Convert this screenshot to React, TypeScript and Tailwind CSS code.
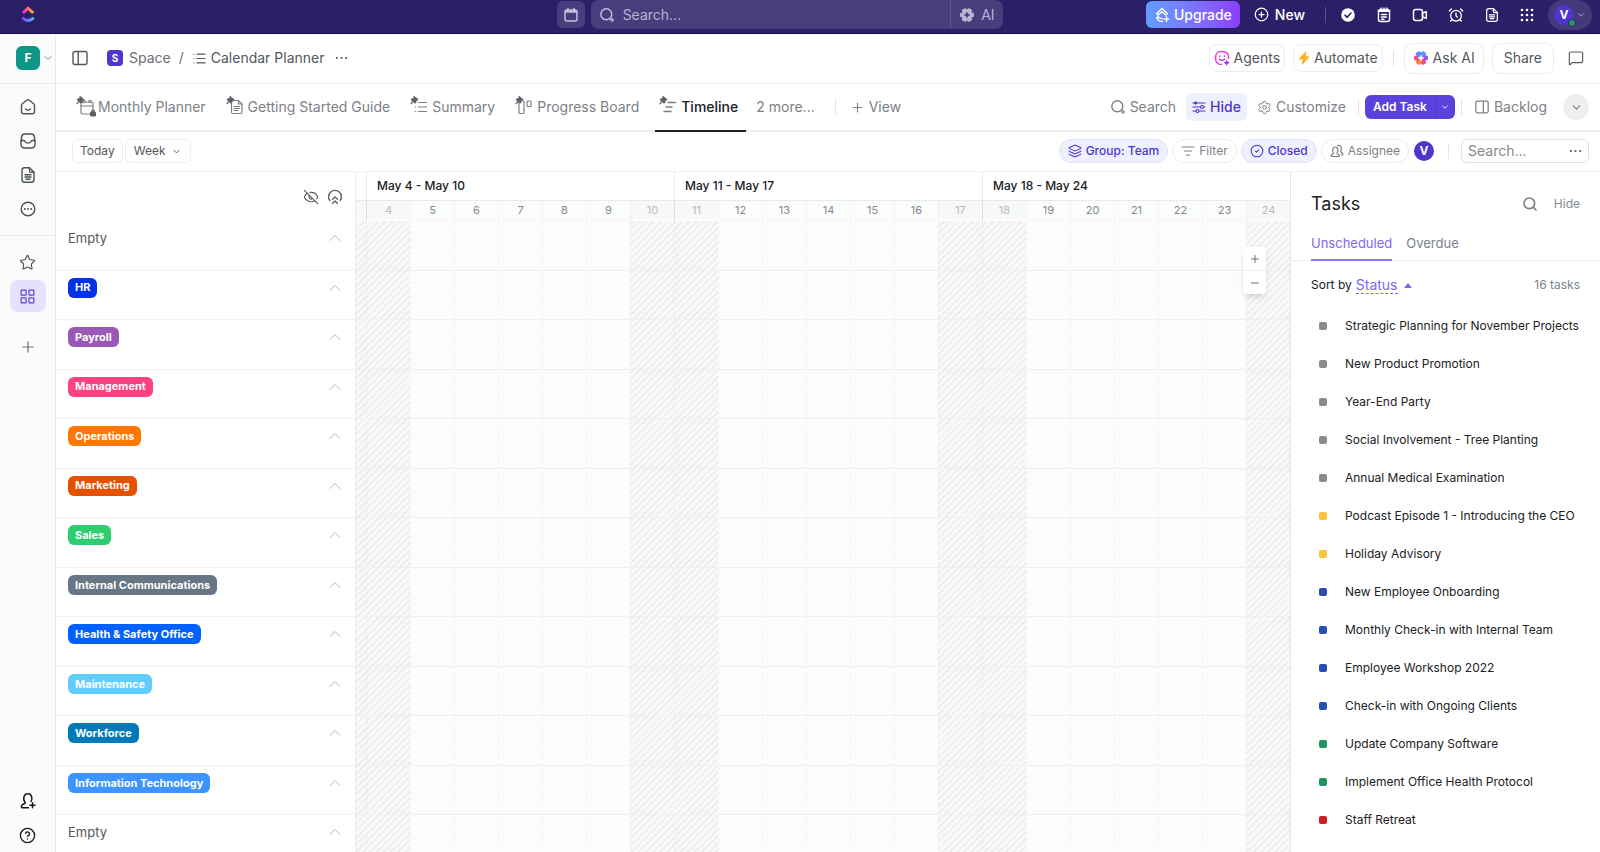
import React, { useState } from 'react';
import {
  AlarmClock,
  ChevronDown,
  ChevronUp,
  CircleCheck,
  CircleHelp,
  CirclePlus,
  EyeOff,
  Layers,
  LayoutGrid,
  List,
  ListFilter,
  MessageSquare,
  Minus,
  Plus,
  Search,
  Settings,
  Star,
} from 'lucide-react';

interface Group {
  name: string;
  color?: string;
}

const groups: Group[] = [
  { name: 'Empty' },
  { name: 'HR', color: 'bg-[#0231e8]' },
  { name: 'Payroll', color: 'bg-[#9b59b6]' },
  { name: 'Management', color: 'bg-[#ff4081]' },
  { name: 'Operations', color: 'bg-[#ff7800]' },
  { name: 'Marketing', color: 'bg-[#e65100]' },
  { name: 'Sales', color: 'bg-[#2ecd6f]' },
  { name: 'Internal Communications', color: 'bg-[#667684]' },
  { name: 'Health & Safety Office', color: 'bg-[#0061ff]' },
  { name: 'Maintenance', color: 'bg-[#61cdff]' },
  { name: 'Workforce', color: 'bg-[#0079b8]' },
  { name: 'Information Technology', color: 'bg-[#3b94ff]' },
  { name: 'Empty' },
];

const tasks = [
  { title: 'Strategic Planning for November Projects', color: 'bg-[#8b8b8b]' },
  { title: 'New Product Promotion', color: 'bg-[#8b8b8b]' },
  { title: 'Year-End Party', color: 'bg-[#8b8b8b]' },
  { title: 'Social Involvement - Tree Planting', color: 'bg-[#8b8b8b]' },
  { title: 'Annual Medical Examination', color: 'bg-[#8b8b8b]' },
  { title: 'Podcast Episode 1 - Introducing the CEO', color: 'bg-[#fbc23c]' },
  { title: 'Holiday Advisory', color: 'bg-[#fbc23c]' },
  { title: 'New Employee Onboarding', color: 'bg-[#2a4db5]' },
  { title: 'Monthly Check-in with Internal Team', color: 'bg-[#2a4db5]' },
  { title: 'Employee Workshop 2022', color: 'bg-[#2a4db5]' },
  { title: 'Check-in with Ongoing Clients', color: 'bg-[#2a4db5]' },
  { title: 'Update Company Software', color: 'bg-[#1f9461]' },
  { title: 'Implement Office Health Protocol', color: 'bg-[#1f9461]' },
  { title: 'Staff Retreat', color: 'bg-[#cb1d22]' },
];

const weeks = ['May 4 - May 10', 'May 11 - May 17', 'May 18 - May 24'];
const days = Array.from({ length: 21 }, (_, i) => i + 4);
const isWeekend = (day: number) => day % 7 === 3 || day % 7 === 4;

const dayColumns = 'grid grid-cols-[10px_repeat(21,minmax(0,1fr))]';
const hatch =
  'bg-fixed bg-[repeating-linear-gradient(135deg,#f8f9f9_0px,#f8f9f9_3px,#eeeeee_3px,#eeeeee_5px)]';

/* ---------- icons ---------- */

function Logo() {
  return (
    <svg width="16" height="18" viewBox="0 0 16 18" fill="none">
      <defs>
        <linearGradient id="logoTop" x1="1" x2="15" y1="6" y2="6" gradientUnits="userSpaceOnUse">
          <stop stopColor="#ff02f0" />
          <stop offset="0.5" stopColor="#f76b7a" />
          <stop offset="1" stopColor="#ffc800" />
        </linearGradient>
        <linearGradient id="logoBottom" x1="1" x2="15" y1="14" y2="14" gradientUnits="userSpaceOnUse">
          <stop stopColor="#8930fd" />
          <stop offset="1" stopColor="#49ccf9" />
        </linearGradient>
      </defs>
      <path d="M2.8 8 8 3.2 13.2 8" stroke="url(#logoTop)" strokeWidth="3" />
      <path d="M2.4 12.6c3.2 3.8 8 3.8 11.2 0" stroke="url(#logoBottom)" strokeWidth="2.8" />
    </svg>
  );
}

function CalendarGlyph() {
  return (
    <svg width="16" height="16" viewBox="0 0 16 16" fill="none" stroke="currentColor" strokeWidth="1.5">
      <rect x="2" y="3" width="12" height="11" rx="2" />
      <path d="M2 4.5h12" strokeWidth="2.4" />
      <path d="M5 1.5v2M11 1.5v2" strokeLinecap="round" />
    </svg>
  );
}

// Six petals round a small star, tinted by the caller
function AiFlower({ colorful = false }: { colorful?: boolean }) {
  const petals = ['#4f9cf9', '#8b5cf6', '#f0468a', '#ff8a2a', '#f0468a', '#5a8bf7'];
  return (
    <svg width="16" height="16" viewBox="0 0 16 16">
      <defs>
        <mask id="flowerHole">
          <rect width="16" height="16" fill="#fff" />
          <path d="M8 5.2 8.9 7.1 10.8 8 8.9 8.9 8 10.8 7.1 8.9 5.2 8 7.1 7.1z" fill="#000" stroke="#000" strokeWidth="0.6" />
        </mask>
      </defs>
      <g mask="url(#flowerHole)">
        {petals.map((petal, i) => (
          <rect
            key={i}
            x="5.4"
            y="1"
            width="5.2"
            height="6.4"
            rx="1.8"
            fill={colorful ? petal : 'currentColor'}
            transform={`rotate(${i * 60 + 30} 8 8)`}
          />
        ))}
      </g>
    </svg>
  );
}

function MagnifierGlyph() {
  return (
    <svg width="16" height="16" viewBox="0 0 16 16" fill="none" stroke="currentColor">
      <circle cx="7.3" cy="7.3" r="5.5" strokeWidth="1.4" />
      <circle cx="13" cy="13" r="1.2" strokeWidth="1.2" />
    </svg>
  );
}

function UpgradeGlyph() {
  return (
    <svg width="16" height="16" viewBox="0 0 16 16" fill="none" stroke="currentColor" strokeWidth="1.4" strokeLinecap="round" strokeLinejoin="round">
      <path d="M2.6 6.4 8 1.6l5.4 4.8-1.6 1.6L8 4.8 4.2 8z" />
      <path d="M4.2 9.6 2.6 10.8c1.2 2.6 3.3 3.8 5.8 3.6M4.2 9.6c.9 1.6 2.2 2.2 4.2 2M12.5 9.6v5M10 12.1h5" />
    </svg>
  );
}

function CheckDisc() {
  return (
    <svg width="16" height="16" viewBox="0 0 16 16" fill="none">
      <circle cx="8" cy="8" r="6.8" fill="#fff" />
      <path d="M5 8.2 7.2 10.3 11 6" stroke="#2b2068" strokeWidth="1.6" strokeLinecap="round" strokeLinejoin="round" />
    </svg>
  );
}

function NotepadGlyph() {
  return (
    <svg width="16" height="16" viewBox="0 0 16 16" fill="none" stroke="currentColor" strokeWidth="1.4" strokeLinecap="round">
      <rect x="2.5" y="2.5" width="11" height="12" rx="2" />
      <path d="M2.5 4h11" strokeWidth="2" />
      <path d="M5 1v2.5M8 1v2.5M11 1v2.5M5.5 7.5h5M5.5 10h5M5.5 12.2h2.5" />
    </svg>
  );
}

function ClipGlyph() {
  return (
    <svg width="16" height="16" viewBox="0 0 16 16" fill="none" stroke="currentColor" strokeWidth="1.5" strokeLinejoin="round">
      <rect x="1.5" y="2.5" width="9" height="11" rx="2.2" />
      <path d="M10.5 6 14.3 4.8v6.4L10.5 10z" />
    </svg>
  );
}

function DotGrid() {
  return (
    <svg width="14" height="14" viewBox="0 0 14 14" fill="currentColor">
      {[2, 7, 12].map((y) => [2, 7, 12].map((x) => <circle key={`${x}-${y}`} cx={x} cy={y} r="1.3" />))}
    </svg>
  );
}

function Dots() {
  return (
    <svg width="13" height="14" viewBox="0 0 14 14" fill="currentColor">
      <circle cx="2" cy="7" r="1.2" />
      <circle cx="7" cy="7" r="1.2" />
      <circle cx="12" cy="7" r="1.2" />
    </svg>
  );
}

function HomeGlyph() {
  return (
    <svg width="18" height="18" viewBox="0 0 18 18" fill="none" stroke="currentColor" strokeWidth="1.4" strokeLinecap="round" strokeLinejoin="round">
      <path d="M2.5 7.6c0-.8.3-1.4.9-1.9l4.2-3.4c.8-.7 2-.7 2.8 0l4.2 3.4c.6.5.9 1.1.9 1.9v5.9c0 1.3-.9 2.2-2.2 2.2H4.7c-1.3 0-2.2-.9-2.2-2.2z" />
      <path d="M6.5 11c1.5 1.4 3.5 1.4 5 0" />
    </svg>
  );
}

function InboxGlyph() {
  return (
    <svg width="18" height="18" viewBox="0 0 18 18" fill="none" stroke="currentColor" strokeWidth="1.4" strokeLinecap="round" strokeLinejoin="round">
      <path d="M2 9.5 2.7 4.6C3 2.9 4 2 5.7 2h6.6c1.7 0 2.7.9 3 2.6L16 9.5V12c0 2.5-1.5 4-4 4H6c-2.5 0-4-1.5-4-4z" />
      <path d="M2 8.5h2.6c.7 0 1.1.4 1.4 1 .9 2.2 5.1 2.2 6 0 .3-.6.7-1 1.4-1H16" />
    </svg>
  );
}

function DocGlyph({ size = 18 }: { size?: number }) {
  return (
    <svg width={size} height={size} viewBox="0 0 18 18" fill="none" stroke="currentColor" strokeWidth="1.4" strokeLinecap="round" strokeLinejoin="round">
      <path d="M10.5 1.8H5.4c-1.4 0-2.4 1-2.4 2.4v9.6c0 1.4 1 2.4 2.4 2.4h7.2c1.4 0 2.4-1 2.4-2.4V6.3z" />
      <path d="M10.5 1.8v3.1c0 .8.6 1.4 1.4 1.4H15M6 8.8h6M6 11h6M7 13.2h4" />
    </svg>
  );
}

function CircleDots() {
  return (
    <svg width="18" height="18" viewBox="0 0 18 18" fill="none" stroke="currentColor" strokeWidth="1.4">
      <circle cx="9" cy="9" r="6.8" />
      <path d="M5.8 9h.1M9 9h.1M12.2 9h.1" strokeWidth="1.8" strokeLinecap="round" />
    </svg>
  );
}

function InviteGlyph() {
  return (
    <svg width="18" height="18" viewBox="0 0 18 18" fill="none" stroke="currentColor" strokeWidth="1.5" strokeLinecap="round" strokeLinejoin="round">
      <path d="M9.5 15.8H4c-1.3 0-2-.9-1.5-2.1.4-1 1.5-1.6 3-2.2.8-.3.9-1 .3-1.7C3.6 7 4.8 1.8 8.7 1.8s5.3 4.4 3.3 7.6" />
      <path d="M13.5 10.8v5M11 13.3h5" />
    </svg>
  );
}

function SidebarGlyph({ size = 18, right = false }: { size?: number; right?: boolean }) {
  return (
    <svg width={size} height={size} viewBox="0 0 18 18" fill="none" stroke="currentColor" strokeWidth="1.4">
      <rect x="2" y="2.5" width="14" height="13" rx="2" />
      <path d={right ? 'M10.5 2.5v13' : 'M7.2 2.5v13'} />
    </svg>
  );
}

function AgentsGlyph() {
  return (
    <svg width="16" height="16" viewBox="0 0 16 16" fill="none" strokeLinecap="round">
      <path d="M14.5 8.5C15 4 13 1.5 8 1.5S1.5 3.5 1.5 8s1.8 6.5 6 6.5" stroke="#e040f0" strokeWidth="1.5" />
      <path d="M5.7 6v.6M10.3 6v.6M5.5 9.3c1.3 1.4 3.7 1.4 5 0" stroke="#b92ce0" strokeWidth="1.3" />
      <path d="M12.7 9.5 13.7 11.7 16 12.7 13.7 13.7 12.7 16 11.7 13.7 9.5 12.7 11.7 11.7z" fill="#b224ef" />
    </svg>
  );
}

function BoltGlyph() {
  return (
    <svg width="12" height="16" viewBox="0 0 12 16" fill="#fdb022">
      <path d="M7.5 1.8C8 1.2 8.6 1.5 8.4 2.3L7.7 6.2h2.6c.8 0 1 .6.6 1.2L4.9 14.3c-.5.5-1 .2-.9-.5L4.7 9.6H1.8c-.8 0-1-.6-.6-1.2z" />
    </svg>
  );
}

function SlidersGlyph() {
  return (
    <svg width="14" height="14" viewBox="0 0 14 14" fill="none" stroke="currentColor" strokeWidth="1.2" strokeLinecap="round">
      <path d="M1 3h12M1 7h7M12 7h1M1 11h2.5M7.5 11H13" />
      <circle cx="10" cy="7" r="1.5" />
      <circle cx="5.5" cy="11" r="1.5" />
      <circle cx="3.6" cy="3" r="1" fill="currentColor" />
    </svg>
  );
}

function AssigneeGlyph() {
  return (
    <svg width="14" height="14" viewBox="0 0 14 14" fill="none" stroke="currentColor" strokeWidth="1.2" strokeLinecap="round" strokeLinejoin="round">
      <path d="M1.2 12.5c-.4-1.5.8-2.2 2-2.7.6-.3.6-.8.2-1.3C1.8 6.3 2.7 3 5.3 3s3.5 3.3 1.9 5.5c-.4.5-.4 1 .2 1.3 1.2.5 2.4 1.2 2 2.7z" />
      <path d="M7.5 1.5c3.3-1 5 2.5 3.3 5.3-.4.6-.2 1 .4 1.3 1.3.7 1.9 1.3 1.6 2.9h-1.3" />
    </svg>
  );
}

function CollapseGlyph() {
  return (
    <svg width="16" height="16" viewBox="0 0 16 16" fill="none" stroke="currentColor" strokeWidth="1.3" strokeLinecap="round" strokeLinejoin="round">
      <path d="M2.8 11.5a6.4 6.4 0 1 1 10.4 0" />
      <path d="M5.5 10.2 8 8l2.5 2.2M5.5 14.2 8 12l2.5 2.2" />
    </svg>
  );
}

// View icon with the small pin over its upper left corner
function TabIcon({ children }: { children: React.ReactNode }) {
  return (
    <svg className="shrink-0" width="22" height="24" viewBox="0 0 22 24" fill="none" stroke="currentColor" strokeWidth="1.2" strokeLinecap="round">
      {children}
      <path d="M4.2 1.3 8.2 4.4 7.4 5.2 6.6 5.3 5.8 8 4.9 8.2 3.4 6.9 1 9.2.6 8.9 2.6 6.2 1 4.8 1.4 4 4 3.1 3.7 2z" fill="#5c5f66" stroke="#5c5f66" strokeWidth="0.6" />
    </svg>
  );
}

const tabs = [
  {
    name: 'Monthly Planner',
    icon: (
      <>
        <rect x="5" y="7" width="12" height="12" rx="1.5" />
        <path d="M5 11h12" />
        <circle cx="8" cy="6.5" r="1.2" fill="#fff" />
        <circle cx="14" cy="6.5" r="1.2" fill="#fff" />
        <rect x="14.5" y="17" width="5" height="4" rx="1" fill="#5c5f66" stroke="#5c5f66" />
        <path d="M15.8 16.5c0-1.8 2.4-1.8 2.4 0" stroke="#5c5f66" />
      </>
    ),
  },
  {
    name: 'Getting Started Guide',
    icon: (
      <>
        <path d="M12.5 5.5H7c-1 0-1.5.6-1.5 1.5v10c0 1 .6 1.5 1.5 1.5h7.5c1 0 1.5-.6 1.5-1.5V9z" />
        <path d="M12.5 5.5V9H16M8 11.5h5.5M8 13.5h5.5M8 15.5h4" />
      </>
    ),
  },
  {
    name: 'Summary',
    icon: <path d="M8.5 7.5h8M8.5 12h8M8.5 16.5h8M5.3 12h.5M5.3 16.5h.5" />,
  },
  {
    name: 'Progress Board',
    icon: (
      <>
        <rect x="4" y="6" width="5" height="12.5" rx="1" />
        <rect x="12" y="6" width="4" height="5.5" rx="1" />
      </>
    ),
  },
  {
    name: 'Timeline',
    icon: <path d="M9 7.5h7.5M7 12h6M5 16.5h7" strokeWidth="1.4" />,
  },
];

/* ---------- page parts ---------- */

function TopBar() {
  return (
    <header className="flex h-[34px] shrink-0 items-start border-b border-[#12065f] bg-[#2b2068] text-white">
      <div className="flex h-7 min-w-0 flex-[17] items-center">
        <a href="#home" aria-label="Home" className="flex w-14 justify-center">
          <Logo />
        </a>
      </div>

      <div className="flex w-[446px] gap-1.5 text-[#c6c1de]">
        <button aria-label="Calendar" className="mt-px flex h-[27px] w-7 items-center justify-center rounded-md bg-[#493e7d]">
          <CalendarGlyph />
        </button>
        <div className="flex h-[29px] flex-1 items-center rounded-lg bg-[#493e7d]">
          <label htmlFor="global-search" aria-label="Search" className="flex w-8 justify-center">
            <MagnifierGlyph />
          </label>
          <input
            id="global-search"
            type="text"
            placeholder="Search..."
            className="min-w-0 flex-1 bg-transparent text-sm outline-none placeholder:text-[#b9b3d4]"
          />
          <button className="flex h-full items-center gap-1.5 border-l border-[#5d538e] px-2 text-sm text-[#b9b3d4]">
            <AiFlower />
            AI
          </button>
        </div>
      </div>

      <div className="flex h-[29px] min-w-0 flex-[18] items-center justify-end pr-2">
        <button className="flex h-[27px] items-center gap-1 rounded-md bg-linear-to-r from-[#5f9dff] to-[#8a3dfb] px-2 text-sm font-medium">
          <UpgradeGlyph />
          Upgrade
        </button>
        <button className="ml-3.5 flex items-center gap-1.5 text-sm font-medium">
          <CirclePlus size={15} />
          New
        </button>
        <span className="ml-5 h-4 w-px bg-[#5d538e]" />
        <nav className="ml-3.5 flex items-center gap-5">
          <a href="#my-work" aria-label="My work">
            <CheckDisc />
          </a>
          <a href="#notepad" aria-label="Notepad">
            <NotepadGlyph />
          </a>
          <a href="#clips" aria-label="Clips">
            <ClipGlyph />
          </a>
          <a href="#reminders" aria-label="Reminders">
            <AlarmClock size={16} />
          </a>
          <a href="#docs" aria-label="Docs">
            <DocGlyph size={16} />
          </a>
          <a href="#apps" aria-label="Apps">
            <DotGrid />
          </a>
        </nav>
        <button aria-label="Account" className="ml-3.5 flex h-[30px] items-center gap-0.5 rounded-full bg-[#453a79] px-1.5">
          <span className="relative flex size-5 items-center justify-center rounded-full bg-[#5035cc] text-xs font-bold">
            V
            <span className="absolute -right-0.5 -bottom-0.5 size-2 rounded-full border border-[#2b2068] bg-[#1f9d61]" />
          </span>
          <ChevronDown size={10} className="text-[#c6c1de]" />
        </button>
      </div>
    </header>
  );
}

function SideRail() {
  const link = 'flex h-[34px] w-9 items-center justify-center';
  return (
    <aside className="flex w-14 shrink-0 flex-col border-r border-[#e8e9ea] bg-[#fafcfb] text-[#4f5257]">
      <div className="flex h-[50px] items-center border-b border-[#ebecec] pb-0.5 pl-4">
        <button aria-label="Workspace" className="flex items-center gap-0.5">
          <span className="flex size-6 items-center justify-center rounded-md bg-[#0d9685] text-xs font-bold text-white">F</span>
          <ChevronDown size={12} className="text-[#85888e]" />
        </button>
      </div>
      <nav className="flex flex-col items-center border-b border-[#ebecec] pt-1.5 pb-[9px]">
        <a href="#home" aria-label="Home" className={link}>
          <HomeGlyph />
        </a>
        <a href="#inbox" aria-label="Inbox" className={link}>
          <InboxGlyph />
        </a>
        <a href="#docs" aria-label="Docs" className={link}>
          <DocGlyph />
        </a>
        <a href="#more" aria-label="More" className={link}>
          <CircleDots />
        </a>
      </nav>
      <nav className="flex flex-col items-center gap-px pt-[9px]">
        <a href="#favorites" aria-label="Favorites" className={link}>
          <Star size={17} strokeWidth={1.6} />
        </a>
        <a href="#spaces" aria-label="Spaces" className="flex h-8 w-9 items-center justify-center rounded-lg bg-[#e3e1fd] text-[#5b43d6]">
          <LayoutGrid size={17} strokeWidth={1.7} />
        </a>
        <button aria-label="Add" className="mt-[17px] flex h-[34px] w-9 items-center justify-center text-[#6c6f75]">
          <Plus size={18} strokeWidth={1.6} />
        </button>
      </nav>
      <div className="mt-auto flex flex-col items-center text-[#17181a]">
        <button aria-label="Invite" className={link}>
          <InviteGlyph />
        </button>
        <button aria-label="Help" className={link}>
          <CircleHelp size={17} strokeWidth={1.9} />
        </button>
      </div>
    </aside>
  );
}

function Breadcrumbs() {
  const button = 'flex items-center gap-1 rounded-lg border border-[#ededee]';
  return (
    <div className="flex h-[50px] shrink-0 items-center border-b border-[#f0f0f1] pr-4 pb-px pl-[15px] text-sm text-[#54575d]">
      <button aria-label="Toggle sidebar">
        <SidebarGlyph />
      </button>
      <a href="#space" className="ml-[18px] flex items-center gap-1.5 text-[#6c6f75]">
        <span className="flex size-4 items-center justify-center rounded bg-[#5035cc] text-[10px] font-bold text-white">S</span>
        Space
      </a>
      <span className="mx-2 text-[#6c6f75]">/</span>
      <a href="#planner" className="flex items-center gap-1">
        <List size={15} strokeWidth={1.7} />
        Calendar Planner
      </a>
      <button aria-label="List options" className="ml-2.5">
        <Dots />
      </button>

      <div className="ml-auto flex items-center gap-2">
        <button className={`${button} h-7 px-1`}>
          <AgentsGlyph />
          Agents
        </button>
        <button className={`${button} h-7 px-1`}>
          <BoltGlyph />
          Automate
        </button>
        <span className="mx-0.5 h-4 w-px bg-[#e4e5e6]" />
        <button className={`${button} h-[31px] px-2`}>
          <AiFlower colorful />
          Ask AI
        </button>
        <button className={`${button} h-[31px] px-[11px]`}>Share</button>
        <button aria-label="Comments" className="ml-1.5">
          <MessageSquare size={16} strokeWidth={1.7} />
        </button>
      </div>
    </div>
  );
}

function ViewTabs() {
  const [active, setActive] = useState('Timeline');
  return (
    <div className="flex h-12 shrink-0 items-stretch border-b-2 border-[#efeff0] pr-[11px] pl-4 text-sm text-[#7c7f85]">
      <nav className="flex items-stretch gap-2">
        {tabs.map((tab) => (
          <a
            key={tab.name}
            href="#view"
            onClick={() => setActive(tab.name)}
            className={
              tab.name === active
                ? '-mb-0.5 flex items-center border-b-2 border-[#202023] pr-2 pl-1 font-medium text-[#202023]'
                : '-mb-0.5 flex items-center border-b-2 border-transparent pr-2 pl-1'
            }
          >
            <span className="text-[#7c7f85]">
              <TabIcon>{tab.icon}</TabIcon>
            </span>
            {tab.name}
          </a>
        ))}
      </nav>
      <div className="flex flex-1 items-center">
        <button className="ml-2.5">2 more...</button>
        <span className="ml-5 h-4 w-px bg-[#e4e5e6]" />
        <button className="ml-3.5 flex items-center gap-1">
          <Plus size={15} strokeWidth={1.7} />
          View
        </button>

        <button className="ml-auto flex items-center gap-1">
          <MagnifierGlyph />
          Search
        </button>
        <button className="ml-2.5 flex h-7 items-center gap-1 rounded-md bg-[#eef0fe] px-1.5 font-medium text-[#5035cc]">
          <SlidersGlyph />
          Hide
        </button>
        <button className="ml-2.5 flex items-center gap-1">
          <Settings size={15} strokeWidth={1.6} />
          Customize
        </button>
        <span className="ml-3 h-4 w-px bg-[#e4e5e6]" />
        <div className="ml-1.5 flex h-6 rounded-md bg-[#5b41dd] text-white">
          <button className="px-2 text-xs font-semibold">Add Task</button>
          <button aria-label="More task types" className="flex w-5 items-center justify-center border-l border-dotted border-[#4a31c4]">
            <ChevronDown size={10} />
          </button>
        </div>
        <span className="ml-1.5 h-4 w-px bg-[#e4e5e6]" />
        <button className="ml-3 flex items-center gap-1">
          <SidebarGlyph size={16} right />
          Backlog
        </button>
        <button aria-label="Collapse header" className="ml-4 flex size-[26px] items-center justify-center rounded-full bg-[#edeff0]">
          <ChevronDown size={13} />
        </button>
      </div>
    </div>
  );
}

function Toolbar() {
  const pill = 'flex h-6 items-center gap-1 rounded-full border border-[#ebecec] px-2 text-[#7c7f85]';
  const activePill =
    'flex h-6 items-center gap-1 rounded-full border border-[#e0e1fb] bg-[#eef0fe] px-2 font-medium text-[#5035cc]';
  return (
    <div className="flex h-10 shrink-0 items-center border-b border-[#f2f2f3] pr-[11px] pb-px pl-4 text-xs text-[#54575d]">
      <button className="h-6 rounded-md border border-[#ededee] px-[7px]">Today</button>
      <label className="ml-0.5 flex h-6 items-center gap-1.5 rounded-md border border-[#ededee] px-2">
        <select aria-label="Time scale" defaultValue="Week" className="field-sizing-content appearance-none bg-transparent outline-none">
          <option>Day</option>
          <option>Week</option>
          <option>Month</option>
        </select>
        <ChevronDown size={11} />
      </label>

      <div className="ml-auto flex items-center gap-1">
        <button className={activePill}>
          <Layers size={14} strokeWidth={1.8} />
          Group: Team
        </button>
        <button className={pill}>
          <ListFilter size={14} strokeWidth={1.8} />
          Filter
        </button>
        <button className={activePill}>
          <CircleCheck size={14} strokeWidth={1.8} />
          Closed
        </button>
        <button className={pill}>
          <AssigneeGlyph />
          Assignee
        </button>
        <button aria-label="Assigned to me" className="ml-px flex size-5 items-center justify-center rounded-full bg-[#5035cc] text-xs font-bold text-white">
          V
        </button>
        <span className="ml-2.5 h-4 w-px bg-[#e4e5e6]" />
        <div className="ml-2 flex h-6 w-32 items-center rounded-md border border-[#dfe0e1] px-1.5">
          <input
            type="text"
            aria-label="Search tasks"
            placeholder="Search..."
            className="min-w-0 flex-1 bg-transparent text-sm outline-none placeholder:text-[#85888e]"
          />
          <button aria-label="Search options">
            <Dots />
          </button>
        </div>
      </div>
    </div>
  );
}

function GroupList() {
  return (
    <section className="w-[300px] shrink-0 overflow-hidden border-r border-[#ebecec]">
      <div className="flex h-[49px] items-center justify-end gap-2 pr-3 text-[#54575d]">
        <button aria-label="Hide empty groups">
          <EyeOff size={16} strokeWidth={1.7} />
        </button>
        <button aria-label="Collapse all">
          <CollapseGlyph />
        </button>
      </div>
      <ul className="grid h-[644px] grid-rows-[repeat(13,minmax(0,1fr))]">
        {groups.map((group, i) => (
          <li key={i} className="flex items-start justify-between border-b border-[#f0f0f1] pt-[7px] pr-2.5 pl-3">
            {group.color ? (
              <span className={`${group.color} flex h-5 items-center rounded-md px-[7px] text-[11px] font-bold text-white`}>
                {group.name}
              </span>
            ) : (
              <span className="text-[13px] leading-5 text-[#54575d]">{group.name}</span>
            )}
            <button aria-label={`Collapse ${group.name}`} className="text-[#b3b5b9]">
              <ChevronUp size={20} strokeWidth={1.2} />
            </button>
          </li>
        ))}
      </ul>
    </section>
  );
}

function dayHeaderClass(day: number) {
  if (!isWeekend(day)) return 'border-[#f4f5f5] bg-[#fbfdfc] text-[#85888e]';
  return day % 7 === 4
    ? 'border-[#dcdddf] border-b-white bg-[#f7f8f8] text-[#b9bbbe]'
    : 'border-[#f0f0f1] border-b-white bg-[#f7f8f8] text-[#b9bbbe]';
}

function TimelineGrid() {
  return (
    <section className="relative min-w-0 flex-1 overflow-hidden">
      <div className="grid h-[29px] grid-cols-[10px_repeat(3,minmax(0,1fr))] border-b border-[#e8e9ea]">
        <span />
        {weeks.map((week) => (
          <div key={week} className="flex items-center border-l border-[#ebecec] pl-2.5 text-xs font-medium text-[#202023]">
            {week}
          </div>
        ))}
      </div>
      <div className={`${dayColumns} h-5 text-[11px]`}>
        <span className="border-b border-white bg-[#f7f8f8]" />
        {days.map((day) => (
          <div key={day} className={`${dayHeaderClass(day)} flex items-center justify-center border-b border-l`}>
            {day}
          </div>
        ))}
      </div>

      {/* Day columns and group rows share one grid cell */}
      <div className="grid h-[644px]">
        <div className={`${dayColumns} col-start-1 row-start-1`}>
          <span className={hatch} />
          {days.map((day) => (
            <div
              key={day}
              className={
                isWeekend(day)
                  ? `${hatch} border-l border-dashed border-[#ececec]`
                  : 'border-l border-dashed border-[#f0f1f1] bg-[#fbfdfc]'
              }
            />
          ))}
        </div>
        <div className="col-start-1 row-start-1 grid grid-rows-[repeat(13,minmax(0,1fr))]">
          {groups.map((_, i) => (
            <div key={i} className="border-b border-[#eeefef]" />
          ))}
        </div>
      </div>

      {/* Zoom control */}
      <div className="absolute top-[75px] right-6 flex w-[23px] flex-col rounded bg-white text-[#6c6f75] shadow-md">
        <button aria-label="Zoom in" className="flex h-6 items-center justify-center border-b border-[#ededee]">
          <Plus size={12} />
        </button>
        <button aria-label="Zoom out" className="flex h-[23px] items-center justify-center">
          <Minus size={12} />
        </button>
      </div>
    </section>
  );
}

function TaskPanel() {
  return (
    <aside className="w-[310px] shrink-0 overflow-hidden border-l border-[#e4e5e6]">
      <div className="flex h-[63px] items-center px-5">
        <h2 className="text-lg text-[#202023]">Tasks</h2>
        <button aria-label="Search tasks" className="ml-auto text-[#7c7f85]">
          <Search size={16} strokeWidth={2.4} />
        </button>
        <button className="ml-4 text-xs text-[#85888e]">Hide</button>
      </div>
      <div className="flex h-[26px] gap-3.5 border-b border-[#ebecec] px-5 text-[13px] leading-4">
        <button className="-mb-px flex border-b-2 border-[#8577f2] text-[#7b68ee]">Unscheduled</button>
        <button className="flex text-[#7c828d]">Overdue</button>
      </div>
      <div className="flex h-[46px] items-center px-5 pt-0.5 text-xs text-[#202023]">
        Sort by
        <button className="ml-1 flex items-center gap-1.5 text-sm text-[#7b68ee]">
          <span className="border-b border-dashed border-[#7b68ee] leading-4">Status</span>
          <svg width="8" height="5" viewBox="0 0 8 5" fill="currentColor">
            <path d="M4 0 8 5H0z" />
          </svg>
        </button>
        <span className="ml-auto text-[#7c828d]">16 tasks</span>
      </div>
      <ul className="text-xs text-[#202023]">
        {tasks.map((task) => (
          <li key={task.title} className="flex h-[38px] items-center gap-[18px] pl-7 whitespace-nowrap">
            <span className={`${task.color} size-2 shrink-0 rounded-xs`} />
            {task.title}
          </li>
        ))}
      </ul>
    </aside>
  );
}

export default function App() {
  return (
    <div className="flex h-screen flex-col overflow-hidden bg-white font-['Inter',sans-serif]">
      <TopBar />
      <div className="flex min-h-0 flex-1">
        <SideRail />
        <main className="flex min-w-0 flex-1 flex-col">
          <Breadcrumbs />
          <ViewTabs />
          <Toolbar />
          <div className="flex min-h-0 flex-1">
            <GroupList />
            <TimelineGrid />
            <TaskPanel />
          </div>
        </main>
      </div>
    </div>
  );
}
